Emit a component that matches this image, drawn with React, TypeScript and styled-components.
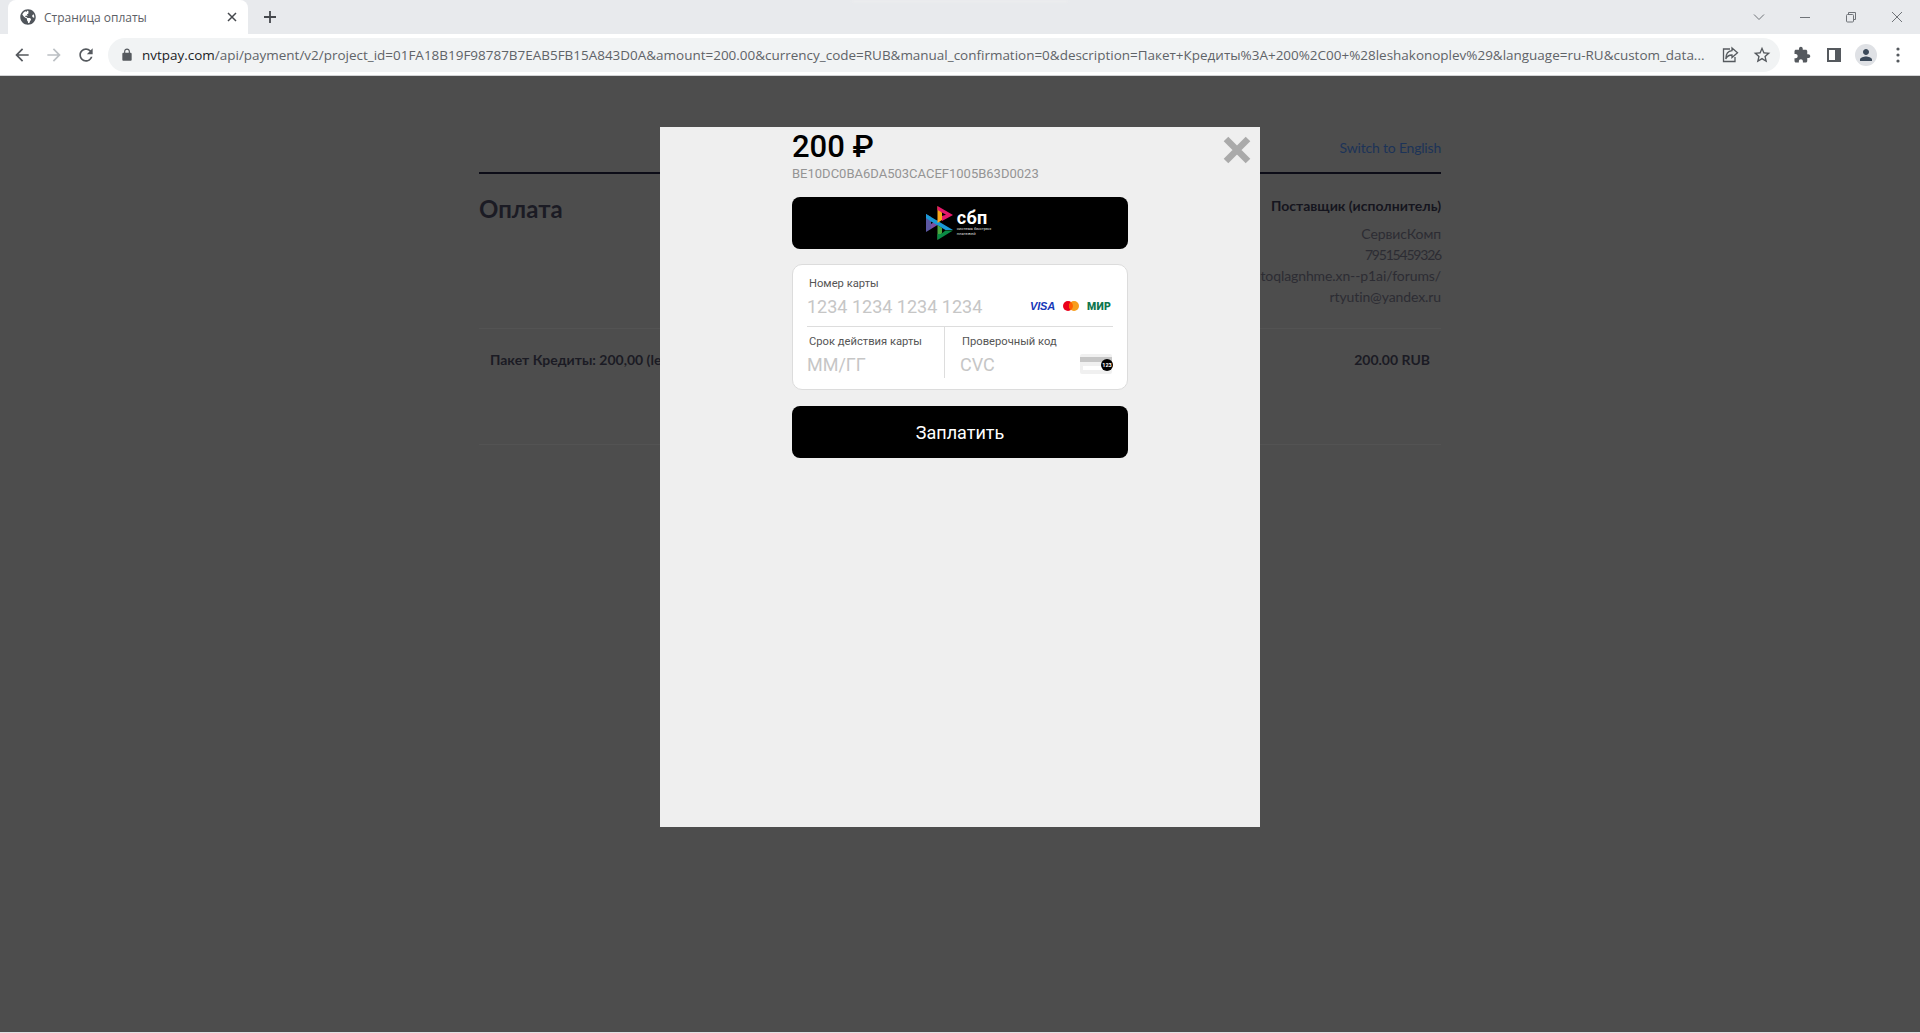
import React from "react";
import styled, { createGlobalStyle } from "styled-components";
import { FaGlobeAmericas } from "react-icons/fa";

const GlobalStyle = createGlobalStyle`
  html, body {
    margin: 0;
    padding: 0;
    height: 100%;
    overflow: hidden;
    background: #4d4d4d;
  }
  * {
    box-sizing: border-box;
  }
`;

const Window = styled.div`
  position: relative;
  width: 1920px;
  height: 1033px;
  display: flex;
  flex-direction: column;
  overflow: hidden;
  font-family: "Open Sans", "Noto Sans", sans-serif;
`;

/* ---------- browser chrome ---------- */

const TabStrip = styled.div`
  position: relative;
  height: 34px;
  flex: none;
  display: flex;
  align-items: flex-end;
  padding-left: 8px;
  background: #e8eaed;
  &::before {
    content: "";
    position: absolute;
    left: 852px;
    top: 0;
    width: 216px;
    height: 3px;
    background: #ebecee;
    filter: blur(1px);
  }
`;

const Tab = styled.div`
  width: 240px;
  height: 34px;
  display: flex;
  align-items: center;
  padding: 0 8px 0 12px;
  border-radius: 8px 8px 0 0;
  background: #fff;
  color: #45484d;
  svg.favicon {
    width: 16px;
    height: 16px;
    color: #50555b;
    flex: none;
  }
`;

const TabTitle = styled.span`
  flex: 1;
  margin-left: 8px;
  font-size: 12px;
  font-family: "Open Sans", sans-serif;
  color: #5c6066;
`;

const NewTab = styled.div`
  width: 28px;
  height: 28px;
  margin: 0 0 3px 8px;
  display: flex;
  align-items: center;
  justify-content: center;
  color: #45484d;
`;

const WindowControls = styled.div`
  margin-left: auto;
  height: 34px;
  display: flex;
  align-items: center;
  color: #6f7378;
`;

const ControlSlot = styled.div`
  width: 46px;
  height: 34px;
  display: flex;
  align-items: center;
  justify-content: center;
`;

const Toolbar = styled.div`
  height: 42px;
  flex: none;
  display: flex;
  align-items: center;
  padding-left: 6px;
  background: #fff;
  border-bottom: 1px solid #d3d4d6;
`;

const NavButton = styled.div<{ $dim?: boolean }>`
  width: 32px;
  height: 32px;
  display: flex;
  align-items: center;
  justify-content: center;
  color: ${(p) => (p.$dim ? "#bcc0c4" : "#55595e")};
`;

const Omnibox = styled.div`
  width: 1672px;
  height: 34px;
  margin-left: 6px;
  display: flex;
  align-items: center;
  padding: 0 2px 0 12px;
  border-radius: 17px;
  background: #f1f3f4;
  color: #55595e;
`;

const Url = styled.div`
  flex: 1;
  min-width: 0;
  margin-left: 8px;
  font-size: 13.47px;
  color: #5f6368;
  white-space: nowrap;
`;

const Host = styled.span`
  color: #202124;
`;

const OmniAction = styled.div`
  width: 32px;
  height: 32px;
  display: flex;
  align-items: center;
  justify-content: center;
`;

const ToolGroup = styled.div`
  display: flex;
  align-items: center;
  margin-left: 6px;
`;

const Avatar = styled.div`
  width: 22px;
  height: 22px;
  border-radius: 50%;
  background: #dfe1e5;
  display: flex;
  align-items: center;
  justify-content: center;
  color: #3c4a5a;
`;

const BottomEdge = styled.div`
  height: 1px;
  flex: none;
  background: #dfe1e4;
`;

/* ---------- dimmed merchant page ---------- */

const Page = styled.main`
  flex: 1;
  background: #4d4d4d;
  padding-top: 46px;
  color: #1b1b24;
  font-family: "Lato", "Noto Sans", sans-serif;
`;

const PageInner = styled.div`
  width: 962px;
  margin: 0 auto;
`;

const PageHeader = styled.div`
  height: 52px;
  display: flex;
  align-items: center;
  justify-content: flex-end;
  border-bottom: 2px solid #0c0c17;
`;

const LangLink = styled.a`
  font-size: 14px;
  letter-spacing: -0.2px;
  color: #1c3358;
`;

const InfoRow = styled.div`
  height: 155px;
  display: flex;
  justify-content: space-between;
  padding-top: 22px;
  border-bottom: 1px solid #535353;
`;

const Title = styled.h1`
  margin: 0;
  font-size: 24px;
  font-weight: 700;
  line-height: 26px;
`;

const Vendor = styled.div`
  margin-top: -1px;
  text-align: right;
  font-size: 14px;
  line-height: 21px;
  letter-spacing: -0.1px;
  color: #2c2c33;
`;

const VendorHead = styled.div`
  margin-bottom: 7px;
  font-weight: 700;
  letter-spacing: 0;
  color: #15151e;
`;

const VendorPhone = styled.div`
  letter-spacing: -1.2px;
`;

const OrderRow = styled.div`
  height: 116px;
  display: flex;
  justify-content: space-between;
  padding: 22px 11px 0;
  font-size: 14px;
  line-height: 18px;
  font-weight: 700;
  border-bottom: 1px solid #535353;
`;

/* ---------- payment modal ---------- */

const Modal = styled.div`
  position: absolute;
  left: 660px;
  top: 127px;
  width: 600px;
  height: 700px;
  display: flex;
  justify-content: center;
  background: #efefef;
  font-family: "Roboto", sans-serif;
`;

const CloseButton = styled.div`
  position: absolute;
  top: 9px;
  right: 9px;
  width: 28px;
  height: 28px;
  color: #aaa;
`;

const Column = styled.div`
  width: 336px;
  display: flex;
  flex-direction: column;
`;

const Amount = styled.div`
  height: 38px;
  font-size: 31px;
  font-weight: 500;
  line-height: 40px;
  color: #000;
`;

const PaymentId = styled.div`
  height: 18px;
  font-size: 13px;
  line-height: 18px;
  color: #949494;
`;

const BlackButton = styled.button`
  width: 100%;
  height: 52px;
  flex: none;
  display: flex;
  align-items: center;
  justify-content: center;
  border: 0;
  border-radius: 8px;
  background: #000;
  color: #fff;
  font-family: "Roboto", sans-serif;
  font-size: 18px;
  font-weight: 400;
`;

const SbpButton = styled(BlackButton)`
  margin-top: 14px;
`;

const PayButton = styled(BlackButton)`
  margin-top: 16px;
  padding-bottom: 1px;
`;

const SbpLogo = styled.div`
  display: flex;
  align-items: center;
  gap: 4px;
  margin-left: -3px;
`;

const SbpWords = styled.div`
  display: flex;
  flex-direction: column;
  color: #fff;
  text-align: left;
`;

const SbpName = styled.span`
  font-size: 18px;
  font-weight: 700;
  line-height: 18px;
  letter-spacing: 0.4px;
`;

const SbpCaption = styled.span`
  font-size: 4.2px;
  line-height: 4.8px;
  font-weight: 400;
  color: #ddd;
  white-space: nowrap;
`;

const CardForm = styled.div`
  margin-top: 15px;
  height: 126px;
  flex: none;
  display: flex;
  flex-direction: column;
  padding: 0 14px;
  border: 1px solid #dcdcdc;
  border-radius: 10px;
  background: #fff;
`;

const CardTop = styled.div`
  height: 62px;
  flex: none;
  display: flex;
  flex-direction: column;
  border-bottom: 1px solid #ddd;
`;

const CardBottom = styled.div`
  height: 51px;
  display: grid;
  grid-template-columns: 138px 1fr;
`;

const Field = styled.div<{ $divided?: boolean }>`
  display: flex;
  flex-direction: column;
  padding-left: ${(p) => (p.$divided ? "15px" : "0")};
  border-right: ${(p) => (p.$divided ? "none" : "1px solid #ddd")};
`;

const FieldLabel = styled.div<{ $top?: boolean }>`
  margin: ${(p) => (p.$top ? "12px" : "8px")} 0 0 2px;
  font-size: 11.2px;
  line-height: 14px;
  color: #555;
`;

const InputRow = styled.div`
  display: flex;
  align-items: center;
  justify-content: space-between;
  margin-top: 4px;
  height: 24px;
`;

const Placeholder = styled.span`
  font-size: 18px;
  line-height: 24px;
  color: #c6c6c6;
`;

const Brands = styled.div`
  display: flex;
  align-items: center;
  gap: 8px;
  margin: -2px 1px 0 0;
`;

const Visa = styled.span`
  width: 25px;
  font-family: "Liberation Sans", sans-serif;
  font-size: 11px;
  font-weight: 700;
  font-style: italic;
  letter-spacing: -0.2px;
  color: #1638b8;
`;

const Mir = styled.span`
  width: 25px;
  font-size: 10.5px;
  font-weight: 900;
  letter-spacing: 0.3px;
  color: #0f754e;
  white-space: nowrap;
`;

const CvcSlot = styled.div`
  display: flex;
  margin-top: -2px;
`;

const Icon = ({ d, size = 24 }: { d: string; size?: number }) => (
  <svg width={size} height={size} viewBox="0 0 24 24" fill="currentColor">
    <path d={d} />
  </svg>
);

const SbpMark = () => (
  <svg width="27" height="34" viewBox="0 0 27 34">
    <path d="M0 8 L0 26 L5 23 L5 11 Z" fill="#5b57a2" />
    <path d="M0 26 L11.5 19 L11.5 14 L5 18 L5 23 Z" fill="#7c4fa0" />
    <path d="M0 8 L27 24 L19.5 24 L5 15.5 L0 12 Z" fill="#1a9ad6" />
    <path d="M11.5 0 L11.5 17 L16 14 L16 6.5 Z" fill="#f9a61a" />
    <path d="M11.5 0 L27 9 L16 15 L16 10 L20 8.8 L11.5 4 Z" fill="#e5186a" />
    <path d="M11.5 19 L11.5 34 L16 27 L16 22 Z" fill="#4aa83f" />
    <path d="M11.5 34 L27 24.5 L19.5 24.5 L15 28 L11.5 28 Z" fill="#0a8a45" />
  </svg>
);

const MasterCard = () => (
  <svg width="16" height="10" viewBox="0 0 16 10">
    <circle cx="5" cy="5" r="5" fill="#eb001b" />
    <circle cx="11" cy="5" r="5" fill="#f79e1b" />
    <path d="M8 1 a5 5 0 0 1 0 8 a5 5 0 0 1 0-8z" fill="#ff5f00" />
  </svg>
);

const CvcCard = () => (
  <svg width="33" height="20" viewBox="0 0 33 20">
    <rect x="0" y="0" width="32" height="20" rx="2" fill="#f0f0f0" />
    <rect x="0" y="3" width="32" height="5" fill="#c6c6c6" />
    <rect x="3" y="12" width="22" height="4" fill="#fff" />
    <circle cx="27" cy="11" r="6" fill="#000" />
    <text x="27" y="13" fontSize="5.5" fontFamily="Roboto, sans-serif" fontWeight="700" textAnchor="middle" fill="#fff">
      123
    </text>
  </svg>
);

const url =
  "/api/payment/v2/project_id=01FA18B19F98787B7EAB5FB15A843D0A&amount=200.00&currency_code=RUB&manual_confirmation=0&description=Пакет+Кредиты%3A+200%2C00+%28leshakonoplev%29&language=ru-RU&custom_data...";

const App: React.FC = () => {
  return (
    <Window>
      <GlobalStyle />
      <TabStrip>
        <Tab>
          <FaGlobeAmericas className="favicon" />
          <TabTitle>Страница оплаты</TabTitle>
          <svg width="16" height="16" viewBox="0 0 16 16" stroke="currentColor" strokeWidth="1.5">
            <path d="M4 4 L12 12 M12 4 L4 12" />
          </svg>
        </Tab>
        <NewTab>
          <svg width="16" height="16" viewBox="0 0 16 16" stroke="currentColor" strokeWidth="1.8">
            <path d="M8 2 V14 M2 8 H14" />
          </svg>
        </NewTab>
        <WindowControls>
          <ControlSlot>
            <svg width="12" height="12" viewBox="0 0 12 12" fill="none" stroke="currentColor">
              <path d="M1 3.5 L6 8.5 L11 3.5" />
            </svg>
          </ControlSlot>
          <ControlSlot>
            <svg width="12" height="12" viewBox="0 0 12 12" stroke="currentColor">
              <path d="M1 6.5 H11" />
            </svg>
          </ControlSlot>
          <ControlSlot>
            <svg width="12" height="12" viewBox="0 0 12 12" fill="none" stroke="currentColor">
              <rect x="1.5" y="3.5" width="7" height="7.5" rx="1" />
              <path d="M3.5 3.5 V1.5 H10.5 V8.5 H8.5" />
            </svg>
          </ControlSlot>
          <ControlSlot>
            <svg width="12" height="12" viewBox="0 0 12 12" stroke="currentColor">
              <path d="M1 1 L11 11 M11 1 L1 11" />
            </svg>
          </ControlSlot>
        </WindowControls>
      </TabStrip>
      <Toolbar>
        <NavButton>
          <Icon size={20} d="M20 11H7.83l5.59-5.59L12 4l-8 8 8 8 1.41-1.41L7.83 13H20v-2z" />
        </NavButton>
        <NavButton $dim>
          <Icon size={20} d="M12 4l-1.41 1.41L16.17 11H4v2h12.17l-5.58 5.59L12 20l8-8z" />
        </NavButton>
        <NavButton>
          <Icon
            size={20}
            d="M17.65 6.35A7.958 7.958 0 0 0 12 4c-4.42 0-7.99 3.58-7.99 8s3.57 8 7.99 8c3.73 0 6.84-2.55 7.73-6h-2.08A5.99 5.99 0 0 1 12 18c-3.31 0-6-2.69-6-6s2.69-6 6-6c1.66 0 3.14.69 4.22 1.78L13 11h7V4l-2.35 2.35z"
          />
        </NavButton>
        <Omnibox>
          <Icon
            size={14}
            d="M18 8h-1V6c0-2.76-2.24-5-5-5S7 3.24 7 6v2H6c-1.1 0-2 .9-2 2v10c0 1.1.9 2 2 2h12c1.1 0 2-.9 2-2V10c0-1.1-.9-2-2-2zM9 6c0-1.66 1.34-3 3-3s3 1.34 3 3v2H9V6z"
          />
          <Url>
            <Host>nvtpay.com</Host>
            {url}
          </Url>
          <OmniAction>
            <svg width="18" height="18" viewBox="0 0 18 18" fill="none" stroke="currentColor" strokeWidth="1.3">
              <path d="M9 3 H2.5 V15.5 H14 V11" />
              <path d="M11 2 L16.5 6.8 L11 11.5 V9 C8 9 6 10 4.8 13 C4.8 8.5 7 5 11 4.6 Z" />
            </svg>
          </OmniAction>
          <OmniAction>
            <Icon
              size={20}
              d="M22 9.24l-7.19-.62L12 2 9.19 8.63 2 9.24l5.46 4.73L5.82 21 12 17.27 18.18 21l-1.63-7.03L22 9.24zM12 15.4l-3.76 2.27 1-4.28-3.32-2.88 4.38-.38L12 6.1l1.71 4.04 4.38.38-3.32 2.88 1 4.28L12 15.4z"
            />
          </OmniAction>
        </Omnibox>
        <ToolGroup>
          <NavButton>
            <Icon
              size={18}
              d="M20.5 11H19V7c0-1.1-.9-2-2-2h-4V3.5C13 2.12 11.88 1 10.5 1S8 2.12 8 3.5V5H4c-1.1 0-1.99.9-1.99 2v3.8H3.5c1.49 0 2.7 1.21 2.7 2.7s-1.21 2.7-2.7 2.7H2V20c0 1.1.9 2 2 2h3.8v-1.5c0-1.49 1.21-2.7 2.7-2.7 1.49 0 2.7 1.21 2.7 2.7V22H17c1.1 0 2-.9 2-2v-4h1.5c1.38 0 2.5-1.12 2.5-2.5S21.88 11 20.5 11z"
            />
          </NavButton>
          <NavButton>
            <svg width="14" height="14" viewBox="0 0 14 14" fill="none">
              <rect x="1" y="1" width="12" height="12" stroke="currentColor" strokeWidth="2" />
              <rect x="8" y="1" width="5" height="12" fill="currentColor" />
            </svg>
          </NavButton>
          <NavButton>
            <Avatar>
              <Icon
                size={18}
                d="M12 12c2.21 0 4-1.79 4-4s-1.79-4-4-4-4 1.79-4 4 1.79 4 4 4zm0 2c-2.67 0-8 1.34-8 4v2h16v-2c0-2.66-5.33-4-8-4z"
              />
            </Avatar>
          </NavButton>
          <NavButton>
            <svg width="4" height="16" viewBox="0 0 4 16" fill="currentColor">
              <circle cx="2" cy="2" r="1.6" />
              <circle cx="2" cy="8" r="1.6" />
              <circle cx="2" cy="14" r="1.6" />
            </svg>
          </NavButton>
        </ToolGroup>
      </Toolbar>

      <Page>
        <PageInner>
          <PageHeader>
            <LangLink>Switch to English</LangLink>
          </PageHeader>
          <InfoRow>
            <Title>Оплата</Title>
            <Vendor>
              <VendorHead>Поставщик (исполнитель)</VendorHead>
              <div>СервисКомп</div>
              <VendorPhone>79515459326</VendorPhone>
              <div>toqlagnhme.xn--p1ai/forums/</div>
              <div>rtyutin@yandex.ru</div>
            </Vendor>
          </InfoRow>
          <OrderRow>
            <span>Пакет Кредиты: 200,00 (leshakonoplev)</span>
            <span>200.00 RUB</span>
          </OrderRow>
        </PageInner>
      </Page>
      <BottomEdge />

      <Modal>
        <CloseButton>
          <svg width="28" height="28" viewBox="0 0 28 28" stroke="currentColor" strokeWidth="6.5">
            <path d="M3 3 L25 25 M25 3 L3 25" />
          </svg>
        </CloseButton>
        <Column>
          <Amount>200 ₽</Amount>
          <PaymentId>BE10DC0BA6DA503CACEF1005B63D0023</PaymentId>
          <SbpButton>
            <SbpLogo>
              <SbpMark />
              <SbpWords>
                <SbpName>сбп</SbpName>
                <SbpCaption>система быстрых</SbpCaption>
                <SbpCaption>платежей</SbpCaption>
              </SbpWords>
            </SbpLogo>
          </SbpButton>
          <CardForm>
            <CardTop>
              <FieldLabel $top>Номер карты</FieldLabel>
              <InputRow>
                <Placeholder>1234 1234 1234 1234</Placeholder>
                <Brands>
                  <Visa>VISA</Visa>
                  <MasterCard />
                  <Mir>МИР</Mir>
                </Brands>
              </InputRow>
            </CardTop>
            <CardBottom>
              <Field>
                <FieldLabel>Срок действия карты</FieldLabel>
                <InputRow>
                  <Placeholder>ММ/ГГ</Placeholder>
                </InputRow>
              </Field>
              <Field $divided>
                <FieldLabel>Проверочный код</FieldLabel>
                <InputRow>
                  <Placeholder>CVC</Placeholder>
                  <CvcSlot>
                    <CvcCard />
                  </CvcSlot>
                </InputRow>
              </Field>
            </CardBottom>
          </CardForm>
          <PayButton>Заплатить</PayButton>
        </Column>
      </Modal>
    </Window>
  );
};

export default App;
